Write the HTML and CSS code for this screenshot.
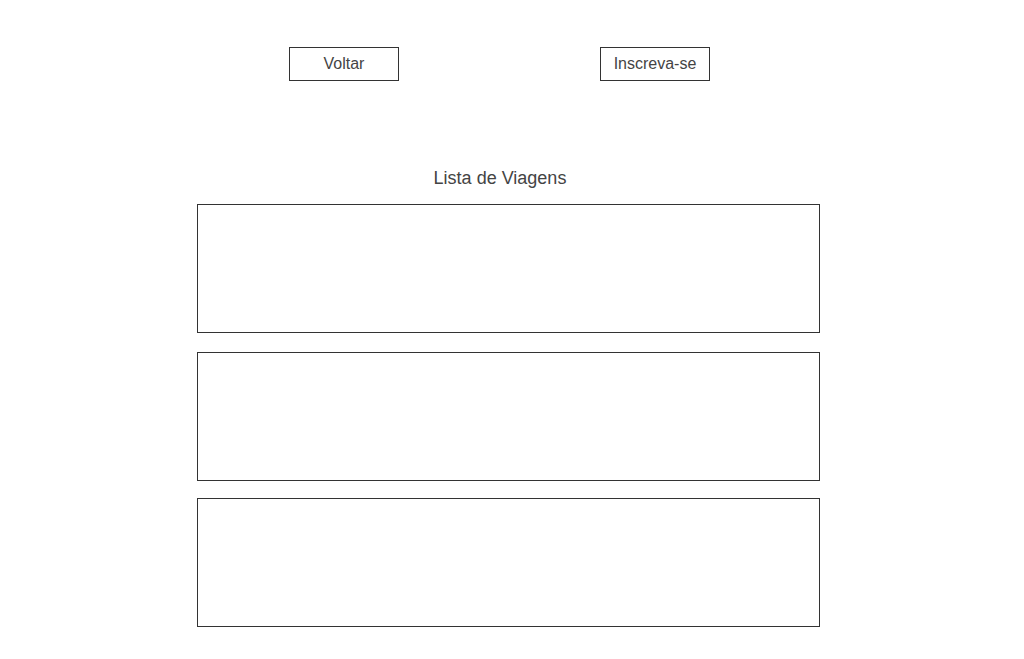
FILE: index.html
```html
<!DOCTYPE html>
<html lang="pt">
<head>
<meta charset="utf-8">
<title>Lista de Viagens</title>
<link rel="stylesheet" href="styles.css">
</head>
<body>
<div class="topbar">
  <div class="btn">Voltar</div>
  <div class="btn">Inscreva-se</div>
</div>
<main class="list">
  <h2 class="title">Lista de Viagens</h2>
  <div class="items">
    <div class="card"></div>
    <div class="card"></div>
    <div class="card"></div>
  </div>
</main>
</body>
</html>
```

FILE: styles.css
```css
html, body {
  margin: 0;
  padding: 0;
  background: #ffffff;
}
body {
  font-family: "Liberation Sans", Arial, sans-serif;
  color: #444444;
}
.topbar {
  display: flex;
  gap: 201px;
  padding: 47px 0 0 289px;
}
.btn {
  box-sizing: border-box;
  width: 110px;
  height: 34px;
  border: 1px solid #333333;
  display: flex;
  align-items: center;
  justify-content: center;
  font-size: 16px;
  line-height: 18px;
}
.list {
  width: 623px;
  margin: 87px 0 0 197px;
}
.title {
  margin: 0 17px 15px 0;
  font-size: 18px;
  font-weight: normal;
  line-height: 21px;
  text-align: center;
}
.items {
  display: flex;
  flex-direction: column;
}
.card {
  box-sizing: border-box;
  height: 129px;
  border: 1px solid #333333;
}
.card + .card {
  margin-top: 19px;
}
.card:last-child {
  margin-top: 17px;
}
```
